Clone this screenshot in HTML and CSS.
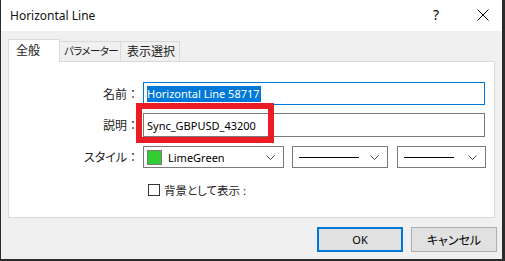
FILE: index.html
```html
<!DOCTYPE html>
<html lang="ja">
<head>
    <meta charset="UTF-8">
    <title>Horizontal Line</title>
    <link rel="stylesheet" href="styles.css">
</head>
<body>
    <div class="window">
        <div class="titlebar">
            <span class="title">Horizontal Line</span>
            <span class="help">?</span>
            <svg class="close" width="12" height="12" viewBox="0 0 12 12">
                <path d="M0.5 0.5 L11.5 11.5 M11.5 0.5 L0.5 11.5" stroke="#000" stroke-width="1"/>
            </svg>
        </div>

        <div class="content">
            <div class="tabs">
                <div class="tab active">全般</div>
                <div class="tab tab-params">パラメーター</div>
                <div class="tab">表示選択</div>
            </div>

            <div class="panel">
                <div class="row row-name">
                    <span class="label">名前<span class="colon">：</span></span>
                    <div class="field focused"><span class="selected">Horizontal Line 58717</span></div>
                </div>
                <div class="row row-desc">
                    <span class="label">説明<span class="colon">：</span></span>
                    <div class="field">Sync_GBPUSD_43200</div>
                </div>
                <div class="row row-style">
                    <span class="label">スタイル<span class="colon">：</span></span>
                    <div class="combo combo-color">
                        <span class="swatch"></span>
                        <span class="combo-text">LimeGreen</span>
                        <svg class="chevron" width="9" height="5" viewBox="0 0 9 5"><path d="M0.5 0.5 L4.5 4.5 L8.5 0.5" fill="none" stroke="#444"/></svg>
                    </div>
                    <div class="combo combo-line">
                        <span class="line-sample"></span>
                        <svg class="chevron" width="9" height="5" viewBox="0 0 9 5"><path d="M0.5 0.5 L4.5 4.5 L8.5 0.5" fill="none" stroke="#444"/></svg>
                    </div>
                    <div class="combo combo-width">
                        <span class="line-sample"></span>
                        <svg class="chevron" width="9" height="5" viewBox="0 0 9 5"><path d="M0.5 0.5 L4.5 4.5 L8.5 0.5" fill="none" stroke="#444"/></svg>
                    </div>
                </div>
                <div class="row row-check">
                    <span class="label"></span>
                    <span class="checkbox"></span>
                    <span class="check-text">背景として表示 :</span>
                </div>
            </div>

            <div class="buttons">
                <div class="btn default">OK</div>
                <div class="btn ja">キャンセル</div>
            </div>
        </div>

        <div class="highlight"></div>
    </div>
</body>
</html>
```

FILE: styles.css
```css
body {
    margin: 0;
    background: #2b2b2b;
    font-family: "Noto Sans", "Noto Sans CJK JP", sans-serif;
    font-size: 11px;
    color: #000;
}
.window {
    position: relative;
    width: 501px;
    height: 259px;
    margin-left: 1px;
    background: #f0f0f0;
    display: flex;
    flex-direction: column;
}
.titlebar {
    height: 31px;
    background: #fff;
    display: flex;
    align-items: center;
}
.title {
    padding-left: 9px;
    flex: 1;
    font-size: 12px;
    color: #111;
}
.help {
    font-size: 14px;
    margin-right: 38px;
    margin-top: -2px;
}
.close {
    margin-right: 13px;
    margin-top: -1px;
}
.content {
    flex: 1;
    padding: 8px 7px 0 7px;
}
.tabs {
    display: flex;
    align-items: flex-end;
    height: 22px;
    position: relative;
    z-index: 1;
}
.tab {
    box-sizing: border-box;
    height: 20px;
    border: 1px solid #d9d9d9;
    border-bottom: none;
    margin-left: -1px;
    padding-left: 6px;
    white-space: nowrap;
    overflow: hidden;
    font-size: 12px;
    line-height: 19px;
    font-feature-settings: "palt";
    color: #222;
}
.tab-params {
    width: 62px;
    padding-left: 4px;
    font-size: 10.5px;
    letter-spacing: -0.6px;
}
.tab:nth-child(3) { width: 60px; }
.tab.active {
    margin-left: 0;
    width: 52px;
    height: 23px;
    margin-bottom: -1px;
    padding-left: 7px;
    background: #fff;
    line-height: 22px;
}
.panel {
    box-sizing: border-box;
    height: 157px;
    background: #fff;
    border: 1px solid #d9d9d9;
    padding-top: 20px;
}
.row {
    display: flex;
    align-items: center;
}
.label {
    width: 130px;
    margin-right: 4px;
    text-align: right;
    font-size: 12px;
    font-feature-settings: "palt";
    flex-shrink: 0;
    color: #222;
}
.colon {
    font-feature-settings: normal;
}
.field {
    box-sizing: border-box;
    width: 342px;
    height: 23px;
    border: 1px solid #7a7a7a;
    padding-left: 3px;
    display: flex;
    align-items: center;
}
.field.focused {
    border-color: #0078d7;
}
.selected {
    background: #0078d7;
    color: #fff;
    line-height: 16px;
    padding-right: 1px;
}
.row-desc { margin-top: 8px; }
.row-desc .field { height: 24px; }
.row-style { margin-top: 9px; }
.combo {
    box-sizing: border-box;
    height: 22px;
    border: 1px solid #7a7a7a;
    display: flex;
    align-items: center;
    padding: 0 8px 0 3px;
    background: #fff;
}
.combo-color { width: 141px; }
.combo-line { width: 96px; margin-left: 8px; padding-left: 6px; }
.combo-width { width: 89px; margin-left: 9px; padding-left: 6px; }
.swatch {
    box-sizing: border-box;
    width: 15px;
    height: 15px;
    background: #32cd32;
    border: 1px solid #7a7a7a;
    margin-right: 6px;
}
.combo-text { flex: 1; }
.line-sample {
    height: 1px;
    background: #000;
    flex: 1;
    margin-right: 11px;
}
.combo-width .line-sample { margin-right: 14px; }
.row-check { margin-top: 14px; }
.checkbox {
    box-sizing: border-box;
    width: 12px;
    height: 12px;
    border: 1px solid #333;
    margin-left: 5px;
    margin-right: 4px;
}
.check-text {
    font-size: 11.5px;
    font-feature-settings: "palt";
    color: #222;
}
.buttons {
    display: flex;
    justify-content: flex-end;
    gap: 8px;
    margin-top: 9px;
    margin-right: -2px;
}
.btn {
    box-sizing: border-box;
    width: 86px;
    height: 25px;
    background: #e1e1e1;
    border: 1px solid #adadad;
    display: flex;
    align-items: center;
    justify-content: center;
}
.btn.ja {
    font-size: 12px;
    font-feature-settings: "palt";
}
.btn.default {
    border: 2px solid #0078d7;
}
.highlight {
    position: absolute;
    left: 135px;
    top: 103px;
    width: 138px;
    height: 40px;
    box-sizing: border-box;
    border: 6px solid #ec1c24;
}
```
